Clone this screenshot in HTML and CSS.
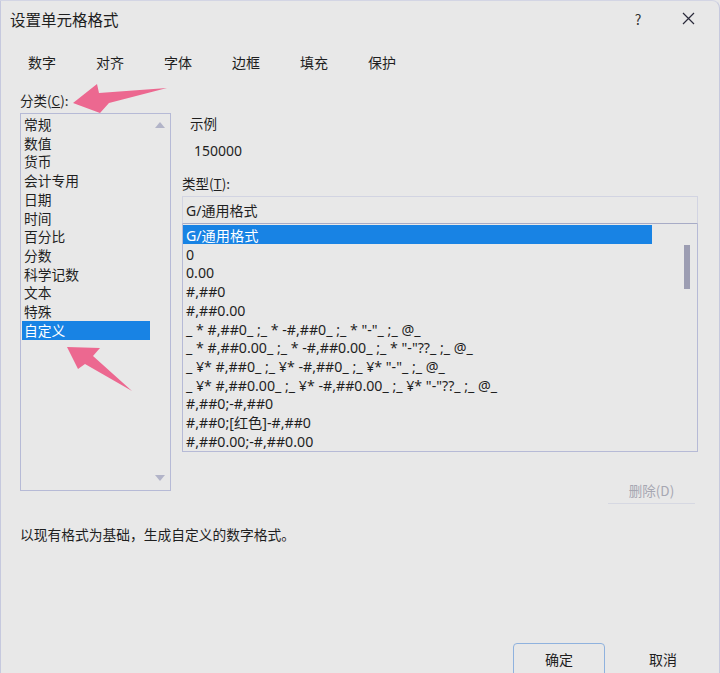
FILE: index.html
```html
<!DOCTYPE html>
<html lang="zh-CN">
<head>
  <meta charset="UTF-8">
  <title>设置单元格格式</title>
  <link rel="stylesheet" href="styles.css">
</head>
<body>
  <div class="dialog">
    <div class="titlebar">
      <span class="title">设置单元格格式</span>
      <span class="help">?</span>
      <span class="close">
        <svg width="13" height="13" viewBox="0 0 13 13"><path d="M1 1 L12 12 M12 1 L1 12" stroke="#2a2a3a" stroke-width="1.2" fill="none"/></svg>
      </span>
    </div>

    <div class="tabs">
      <span class="tab">数字</span>
      <span class="tab">对齐</span>
      <span class="tab">字体</span>
      <span class="tab">边框</span>
      <span class="tab">填充</span>
      <span class="tab">保护</span>
    </div>

    <div class="main">
      <div class="left">
        <div class="label">分类(<u>C</u>):</div>
        <div class="category-box">
          <ul class="category-list">
            <li>常规</li>
            <li>数值</li>
            <li>货币</li>
            <li>会计专用</li>
            <li>日期</li>
            <li>时间</li>
            <li>百分比</li>
            <li>分数</li>
            <li>科学记数</li>
            <li>文本</li>
            <li>特殊</li>
            <li class="selected">自定义</li>
          </ul>
          <div class="vscroll">
            <span class="tri up"></span>
            <span class="tri down"></span>
          </div>
        </div>
      </div>

      <div class="right">
        <div class="sample-label">示例</div>
        <div class="sample-value">150000</div>
        <div class="label type-label">类型(<u>T</u>):</div>
        <div class="type-input">G/通用格式</div>
        <div class="type-box">
          <ul class="type-list">
            <li class="selected">G/通用格式</li>
            <li>0</li>
            <li>0.00</li>
            <li>#,##0</li>
            <li>#,##0.00</li>
            <li>_ * #,##0_ ;_ * -#,##0_ ;_ * "-"_ ;_ @_</li>
            <li>_ * #,##0.00_ ;_ * -#,##0.00_ ;_ * "-"??_ ;_ @_</li>
            <li>_ ¥* #,##0_ ;_ ¥* -#,##0_ ;_ ¥* "-"_ ;_ @_</li>
            <li>_ ¥* #,##0.00_ ;_ ¥* -#,##0.00_ ;_ ¥* "-"??_ ;_ @_</li>
            <li>#,##0;-#,##0</li>
            <li>#,##0;[红色]-#,##0</li>
            <li>#,##0.00;-#,##0.00</li>
          </ul>
          <div class="type-scroll"><div class="thumb"></div></div>
        </div>
        <div class="delete-row">
          <button class="delete-button">删除(D)</button>
        </div>
      </div>
    </div>

    <p class="desc">以现有格式为基础，生成自定义的数字格式。</p>

    <div class="footer">
      <button class="button ok-button">确定</button>
      <button class="button cancel-button">取消</button>
    </div>

    <!-- annotation arrows drawn over the dialog -->
    <svg class="marks" width="720" height="673" viewBox="0 0 720 673">
      <polygon points="73,103 97,84 99,93 167,88 109,103 100,113" fill="#ec6890"/>
      <polygon points="67,347 100,348 93,356 132,391 85,364 78,369" fill="#ec6890"/>
    </svg>
  </div>
</body>
</html>
```

FILE: styles.css
```css
/* Reset */
* {
  margin: 0;
  padding: 0;
  box-sizing: border-box;
}

body {
  background-color: #e8e8e8;
  font-family: "Noto Sans CJK SC", "Noto Sans", sans-serif;
  color: #1f1f1f;
  width: 720px;
  height: 673px;
  overflow: hidden;
}

/* Dialog frame */
.dialog {
  position: relative;
  width: 720px;
  height: 673px;
  background-color: #e8e8e8;
  border-left: 1px solid #c6c9de;
  border-top: 1px solid #d3d5e4;
  border-right: 1px solid #c6c9de;
  border-top-right-radius: 8px;
  overflow: hidden;
}

/* Title bar */
.titlebar {
  display: flex;
  align-items: center;
  height: 35px;
  padding-left: 9px;
}

.title {
  font-size: 15.5px;
  flex: 1;
}

.help {
  font-size: 14px;
  color: #333;
  width: 54px;
  text-align: center;
  margin-right: -4px;
}

.close {
  display: flex;
  align-items: center;
  justify-content: center;
  width: 54px;
  margin-right: 4px;
}

/* Tabs */
.tabs {
  display: flex;
  margin-top: 14px;
  height: 24px;
  padding-left: 27px;
  align-items: center;
}

.tab {
  width: 68px;
  font-size: 14px;
}

/* Main two-column area */
.main {
  display: grid;
  grid-template-columns: 151px 516px;
  column-gap: 11px;
  margin-top: 17px;
  padding-left: 19px;
}

.label {
  font-size: 13.5px;
  line-height: 18px;
  margin-bottom: 4px;
}

/* Category list */
.category-box {
  display: flex;
  height: 378px;
  border: 1px solid #b6bad6;
}

.category-list {
  list-style: none;
  width: 128px;
  margin-left: 1px;
  padding-top: 1px;
}

.category-list li,
.type-list li {
  font-size: 13.75px;
  line-height: 18.73px;
  height: 18.73px;
  padding-left: 2px;
  white-space: nowrap;
}

.category-list .selected,
.type-list .selected {
  background-color: #1883e4;
  color: #fff;
}

.vscroll {
  flex: 1;
  display: flex;
  flex-direction: column;
  justify-content: space-between;
  align-items: center;
  padding: 8px 0 9px;
}

.tri {
  width: 0;
  height: 0;
  border-left: 5px solid transparent;
  border-right: 5px solid transparent;
}

.tri.up {
  border-bottom: 6px solid #b2b4c8;
}

.tri.down {
  border-top: 6px solid #b2b4c8;
}

/* Right column */
.right {
  padding-top: 23px;
}

.sample-label {
  font-size: 13.5px;
  line-height: 18px;
  padding-left: 8px;
}

.sample-value {
  font-family: "Noto Sans", "Noto Sans CJK SC", sans-serif;
  font-size: 14px;
  line-height: 18px;
  margin-top: 10px;
  padding-left: 12px;
}

.type-label {
  margin-top: 14px;
  margin-bottom: 4px;
}

.type-input {
  height: 28px;
  border: 1px solid #d2d4e2;
  border-bottom-color: #a7abc6;
  font-family: "Noto Sans", "Noto Sans CJK SC", sans-serif;
  font-size: 14px;
  line-height: 26px;
  padding-top: 1px;
  padding-left: 3px;
}

.type-box {
  display: flex;
  height: 228px;
  border: 1px solid #b6bad6;
  border-top: none;
}

.type-list {
  list-style: none;
  width: 469px;
  padding-top: 1px;
}

.type-list li {
  font-family: "Noto Sans", "Noto Sans CJK SC", sans-serif;
  font-size: 14.2px;
  padding-left: 3px;
  padding-top: 2px;
}

.type-scroll {
  flex: 1;
  padding-top: 21px;
  padding-left: 32px;
}

.thumb {
  width: 6px;
  height: 44px;
  background-color: #9c9db2;
}

.delete-row {
  display: flex;
  justify-content: flex-end;
  margin-top: 24px;
  padding-right: 3px;
}

.delete-button {
  width: 87px;
  height: 28px;
  background: transparent;
  border: none;
  border-bottom: 1px solid #d6d8e2;
  font-family: inherit;
  font-size: 13.5px;
  color: #a6a7b2;
}

/* Description */
.desc {
  margin-top: 21px;
  padding-left: 19px;
  font-size: 13.75px;
  line-height: 18px;
}

/* Footer buttons */
.footer {
  display: flex;
  justify-content: flex-end;
  gap: 12px;
  margin-top: 100px;
  padding-right: 10px;
}

.button {
  width: 92px;
  height: 34px;
  background: transparent;
  font-family: inherit;
  font-size: 14px;
  color: #1f1f1f;
  border-radius: 4px;
  padding-bottom: 2px;
}

.ok-button {
  border: 1px solid #8fb2de;
}

.cancel-button {
  border: 1px solid transparent;
}

/* Annotation overlay */
.marks {
  position: absolute;
  left: -1px;
  top: -1px;
  pointer-events: none;
}
```
